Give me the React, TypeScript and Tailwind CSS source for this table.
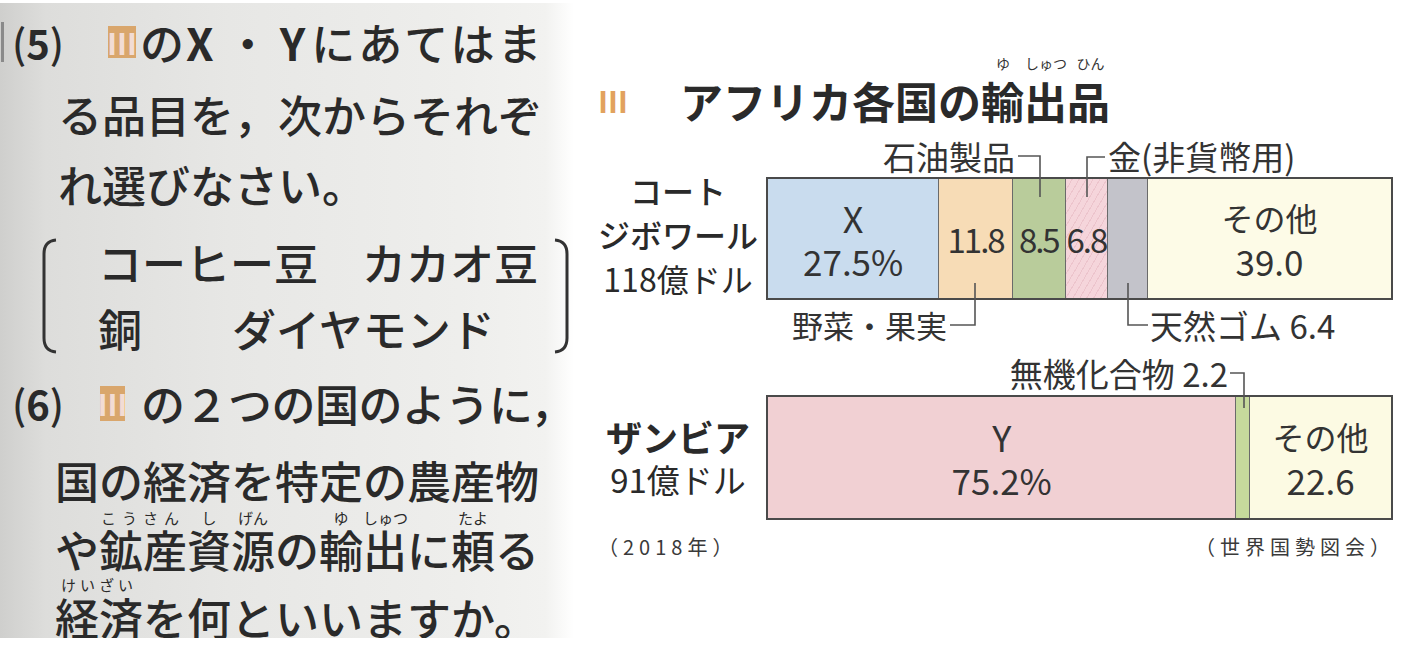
import React from "react";

type Seg = { pct: number; cls: string; top?: string; bottom?: string; small?: string };

const row1: Seg[] = [
  { pct: 27.5, cls: "bg-[#c9dcee]", top: "X", bottom: "27.5%" },
  { pct: 11.8, cls: "bg-[#f7dcb6]", small: "11.8" },
  { pct: 8.5, cls: "bg-[#b9cc9b]", small: "8.5" },
  { pct: 6.8, cls: "bg-[repeating-linear-gradient(120deg,#f5d5db_0px,#f5d5db_5px,#ecc4cc_5px,#ecc4cc_6px)]", small: "6.8" },
  { pct: 6.4, cls: "bg-[#c3c3ca]" },
  { pct: 39.0, cls: "bg-[#fdfbe7]", top: "その他", bottom: "39.0" },
];

const row2: Seg[] = [
  { pct: 75.2, cls: "bg-[#f1d0d3]", top: "Y", bottom: "75.2%" },
  { pct: 2.2, cls: "bg-[#c6da9c]" },
  { pct: 22.6, cls: "bg-[#fcfae3]", top: "その他", bottom: "22.6" },
];

function Bar({ segs, h }: { segs: Seg[]; h: string }) {
  return (
    <div className={`w-[627px] ${h} border-2 border-[#4a4a4a] flex`}>
      {segs.map((s, i) => (
        <div
          key={i}
          style={{ width: `${s.pct}%` }}
          className={`${s.cls} h-full flex flex-col items-center justify-center whitespace-nowrap ${
            i < segs.length - 1 ? "border-r-[1.5px] border-[#6a6a6a]" : ""
          }`}
        >
          {s.top && (
            <span className={s.top === "その他" ? "text-[32px] leading-[43px]" : "text-[36px] leading-[43px]"}>{s.top}</span>
          )}
          {s.bottom && <span className="text-[35px] leading-[43px]">{s.bottom}</span>}
          {s.small && <span className="text-[33px] leading-[40px] tracking-[-2px]">{s.small}</span>}
        </div>
      ))}
    </div>
  );
}

function Bracket({ flip }: { flip?: boolean }) {
  return (
    <svg width="18" height="116" viewBox="0 0 18 116" className="shrink-0">
      <path
        d={flip ? "M2 2 Q14 3 14 16 V100 Q14 113 2 114" : "M16 2 Q4 3 4 16 V100 Q4 113 16 114"}
        fill="none"
        stroke="#333"
        strokeWidth="3"
      />
    </svg>
  );
}

function LeftPanel() {
  return (
    <div className="mt-[3px] w-[574px] h-[635px] shrink-0 overflow-hidden flex flex-col bg-[linear-gradient(to_right,#cfcfcd_0%,#dddddb_8%,#e7e7e5_40%,#eeeeec_80%,#f2f2f0_95%,#ffffff_100%)] font-medium text-[44px] leading-[44px] text-[#2a2a2a]">
      <div className="mt-[17px] h-[44px] flex items-center whitespace-nowrap">
        <span className="w-[3px] h-[40px] bg-[#8a8a8a] ml-[1px]" />
        <span className="ml-[8px] text-[40px]">
          (<span className="font-bold">5</span>)
        </span>
        <span className="ml-[44px] w-[28px] h-[32px] bg-[#d9a66c] text-[#f2dcd4] text-[30px] leading-[32px] font-bold flex items-center justify-center">
          Ⅲ
        </span>
        <span className="ml-[4px]">の</span>
        <span className="font-bold ml-[2px]">X</span>
        <span className="ml-[12px] mr-[10px]">・</span>
        <span className="font-bold">Y</span>
        <span className="ml-[6px] tracking-[3px]">にあてはま</span>
      </div>
      <div className="mt-[28px] h-[44px] pl-[58px] whitespace-nowrap">る品目を，次からそれぞ</div>
      <div className="mt-[26px] h-[44px] pl-[58px] whitespace-nowrap">れ選びなさい。</div>
      <div className="mt-[32px] h-[116px] flex pl-[40px]">
        <Bracket />
        <div className="ml-[40px] w-[455px] flex flex-col pt-[2px] gap-[22px]">
          <div className="h-[44px] whitespace-nowrap">
            コーヒー豆<span className="ml-[44px]">カカオ豆</span>
          </div>
          <div className="h-[44px] whitespace-nowrap">
            銅<span className="ml-[90px]">ダイヤモンド</span>
          </div>
        </div>
        <Bracket flip />
      </div>
      <div className="mt-[27px] h-[44px] flex items-center whitespace-nowrap">
        <span className="ml-[12px] text-[40px]">
          (<span className="font-bold">6</span>)
        </span>
        <span className="ml-[36px] w-[25px] h-[35px] bg-[#d9a66c] text-[#f2dcd4] text-[30px] leading-[35px] font-bold flex items-center justify-center">
          Ⅲ
        </span>
        <span className="ml-[16px] tracking-[-0.5px]">の２つの国のように，</span>
      </div>
      <div className="mt-[33px] h-[44px] pl-[55px] whitespace-nowrap">国の経済を特定の農産物</div>
      <div className="mt-[7px] h-[18px] pl-[55px] flex text-[15px] leading-[18px] font-normal whitespace-nowrap">
        <span className="w-[44px]" />
        <span className="w-[88px] text-center tracking-[6px]">こうさん</span>
        <span className="w-[44px] text-center">し</span>
        <span className="w-[44px] text-center">げん</span>
        <span className="w-[44px]" />
        <span className="w-[44px] text-center">ゆ</span>
        <span className="w-[44px] text-center">しゅつ</span>
        <span className="w-[44px]" />
        <span className="w-[44px] text-center">たよ</span>
      </div>
      <div className="h-[44px] pl-[55px] whitespace-nowrap">や鉱産資源の輸出に頼る</div>
      <div className="mt-[5px] h-[18px] pl-[55px] flex text-[15px] leading-[18px] font-normal whitespace-nowrap">
        <span className="w-[88px] text-center tracking-[4px]">けいざい</span>
      </div>
      <div className="mt-[1px] h-[44px] pl-[55px] whitespace-nowrap">経済を何といいますか。</div>
    </div>
  );
}

function RightPanel() {
  return (
    <div className="flex-1 flex flex-col text-[#333]">
      <div className="mt-[55px] h-[16px] flex text-[14px] leading-[16px] pl-[409px] whitespace-nowrap">
        <span className="w-[40px] text-center">ゆ</span>
        <span className="w-[46px] text-center">しゅつ</span>
        <span className="w-[43px] text-center">ひん</span>
      </div>
      <div className="mt-[6px] h-[46px] flex items-center whitespace-nowrap">
        <span className="ml-[24px] w-[82px] text-[30px] leading-[46px] font-bold text-[#e2a25e]">Ⅲ</span>
        <span className="text-[43px] leading-[46px] font-bold text-[#2a2a2a]">アフリカ各国の輸出品</span>
      </div>

      <div className="mt-[16px] h-[34px] flex text-[33px] leading-[34px] whitespace-nowrap">
        <span className="w-[441px] text-right">石油製品</span>
        <span className="ml-[93px]">金(非貨幣用)</span>
      </div>
      <div className="mt-[4px] flex">
        <div className="ml-[16px] w-[176px] h-[123px] flex flex-col justify-center items-center pb-[10px] leading-[44px] whitespace-nowrap text-[#2a2a2a]">
          <span className="text-[32px] font-medium">コート</span>
          <span className="text-[32px] font-medium">ジボワール</span>
          <span className="text-[32px]">118億ドル</span>
        </div>
        <Bar segs={row1} h="h-[123px]" />
      </div>
      <div className="mt-[8px] h-[34px] flex text-[33px] leading-[34px] whitespace-nowrap">
        <span className="w-[373px] text-right text-[31px]">野菜・果実</span>
        <span className="ml-[203px]">天然ゴム 6.4</span>
      </div>

      <div className="mt-[14px] h-[34px] flex text-[33px] leading-[34px] whitespace-nowrap">
        <span className="w-[654px] text-right">無機化合物 2.2</span>
      </div>
      <div className="mt-[5px] flex">
        <div className="ml-[16px] w-[176px] h-[125px] flex flex-col justify-center items-center leading-[43px] whitespace-nowrap text-[#2a2a2a]">
          <span className="text-[36px] font-bold">ザンビア</span>
          <span className="text-[33px]">91億ドル</span>
        </div>
        <Bar segs={row2} h="h-[125px]" />
      </div>

      <div className="mt-[17px] h-[20px] flex justify-between pl-[24px] pr-[26px] text-[20px] leading-[20px] tracking-[5px] text-[#3a3a3a] whitespace-nowrap">
        <span>（2018年）</span>
        <span>（世界国勢図会）</span>
      </div>
    </div>
  );
}

function Leaders() {
  return (
    <svg className="absolute left-0 top-0 pointer-events-none" width="1421" height="651" viewBox="0 0 1421 651">
      <g fill="none" stroke="#555" strokeWidth="1.6">
        <path d="M1018 156 H1040 V197" />
        <path d="M1105 157 H1087 V197" />
        <path d="M950 325 H975 V283" />
        <path d="M1148 325 H1128 V283" />
        <path d="M1230 373 H1244 V408" />
      </g>
    </svg>
  );
}

export default function App() {
  return (
    <div className="relative w-[1421px] h-[651px] bg-white flex overflow-hidden font-['Noto_Sans_CJK_JP','Noto_Sans',sans-serif]">
      <LeftPanel />
      <RightPanel />
      <Leaders />
    </div>
  );
}
